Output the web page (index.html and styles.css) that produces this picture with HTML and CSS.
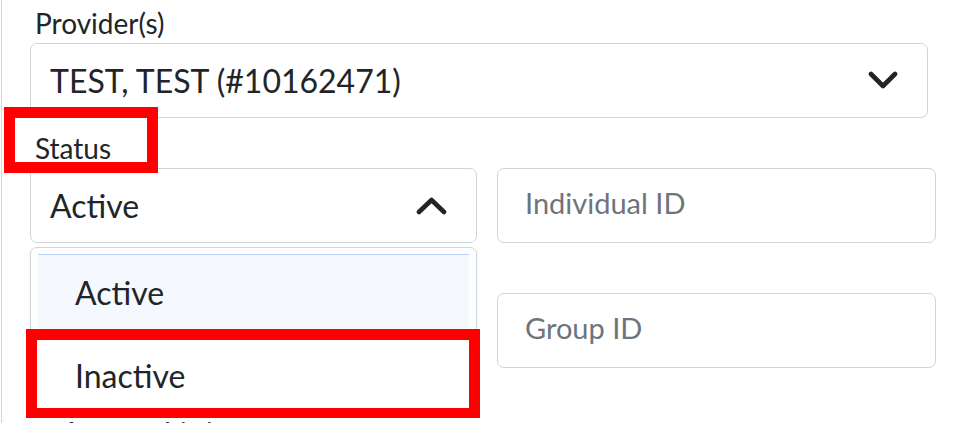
FILE: index.html
```html
<!DOCTYPE html>
<html lang="en">
<head>
<meta charset="utf-8">
<title>Insurance form</title>
<link rel="stylesheet" href="styles.css">
</head>
<body>
<div class="page">
  <div class="form">
    <div class="field span provider">
      <div class="lbl">Provider(s)</div>
      <div class="select wide">
        <span class="value">TEST, TEST (#10162471)</span>
        <svg class="chev" width="30" height="19" viewBox="0 0 30 19"><path d="M3 3 L15 15 L27 3" fill="none" stroke="#212529" stroke-width="4.6" stroke-linecap="round" stroke-linejoin="round"/></svg>
      </div>
    </div>

    <div class="field status">
      <div class="lbl">Status</div>
      <div class="select">
        <span class="value">Active</span>
        <svg class="chev" width="31" height="18" viewBox="0 0 31 18"><path d="M3 15 L15.5 3 L28 15" fill="none" stroke="#212529" stroke-width="4.6" stroke-linecap="round" stroke-linejoin="round"/></svg>
      </div>
      <ul class="menu">
        <li class="opt hl">Active</li>
        <li class="opt">Inactive</li>
      </ul>
    </div>

    <div class="field">
      <div class="lbl"></div>
      <div class="input"><span class="ph">Individual ID</span></div>
    </div>

    <div class="field">
      <div class="lbl"></div>
      <div class="select"></div>
    </div>

    <div class="field">
      <div class="lbl"></div>
      <div class="input"><span class="ph">Group ID</span></div>
    </div>

    <div class="check span">
      <span class="box"></span>
      <span class="check-text">Accept this insurance</span>
    </div>
  </div>

  <div class="mark mark-status"></div>
  <div class="mark mark-inactive"></div>
</div>
</body>
</html>
```

FILE: styles.css
```css
html, body {
  margin: 0;
  padding: 0;
  background: #ffffff;
  overflow: hidden;
}

body {
  font-family: Lato, "Noto Sans", sans-serif;
  color: #212529;
}

.page {
  position: relative;
  height: 423px;
  margin-left: 1px;
  border-left: 1px solid #d6d6d6;
  overflow: hidden;
}

.form {
  display: grid;
  grid-template-columns: 447px 439px;
  column-gap: 20px;
  padding-left: 28px;
  margin-top: -7px;
}

.span {
  grid-column: 1 / 3;
}

.field {
  display: flex;
  flex-direction: column;
}

.status {
  position: relative;
  z-index: 2;
}

.lbl {
  font-size: 28px;
  line-height: 34px;
  height: 34px;
  margin-top: 13px;
  margin-bottom: 3px;
  padding-left: 5px;
}

.select,
.input {
  box-sizing: border-box;
  height: 75px;
  border: 1px solid #ced4da;
  border-radius: 7px;
  background: #fff;
  display: flex;
  align-items: center;
}

.select {
  justify-content: space-between;
  padding: 0 29px 0 19px;
  font-size: 32px;
}

.select.wide {
  width: 898px;
}

.select .value {
  line-height: 38px;
}

.input {
  padding: 0 0 7px 27px;
  font-size: 29px;
}

.ph {
  color: #6c757d;
}

.menu {
  position: absolute;
  left: 0;
  right: 0;
  top: calc(100% + 4px);
  margin: 0;
  list-style: none;
  box-sizing: border-box;
  height: 168px;
  padding: 6px 7px 6px 7px;
  background: #fff;
  border: 1px solid #d3d6da;
  border-radius: 7px;
  box-shadow: 0 1px 3px rgba(0, 0, 0, 0.08);
}

.opt {
  font-size: 32px;
  line-height: 77px;
  padding-left: 37px;
}

.opt.hl {
  background: #f5f8fd;
  border-top: 1px solid #b6d4f2;
  height: 82px;
  line-height: 76px;
}

.check {
  display: flex;
  align-items: center;
  gap: 12px;
  margin-top: 47px;
  padding-left: 2px;
  font-size: 28px;
  line-height: 34px;
}

.check .box {
  width: 16px;
  height: 16px;
  border: 1px solid #6c757d;
  border-radius: 3px;
}

.mark {
  position: absolute;
  box-sizing: border-box;
  border: 11px solid #ff0000;
  z-index: 5;
}

.mark-status {
  left: 2px;
  top: 107px;
  width: 154px;
  height: 66px;
}

.mark-inactive {
  left: 24px;
  top: 329px;
  width: 454px;
  height: 89px;
  border-bottom-width: 10px;
}
```
